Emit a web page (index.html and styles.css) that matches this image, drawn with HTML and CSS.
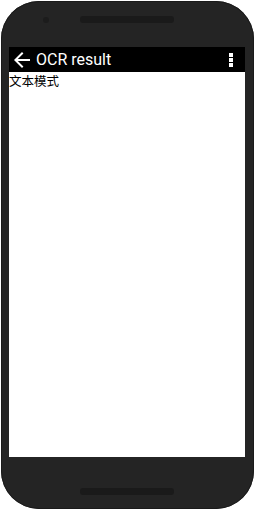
FILE: index.html
```html
<!DOCTYPE html>
<html lang="zh">
<head>
<meta charset="UTF-8">
<meta name="viewport" content="width=device-width, initial-scale=1.0">
<title>OCR result</title>
<link rel="stylesheet" href="styles.css">
</head>
<body>
<div class="phone">
    <!-- top bezel: camera + speaker -->
    <div class="camera"></div>
    <div class="speaker top"></div>
    <div class="screen">
        <div class="toolbar">
            <svg class="back-icon" viewBox="0 0 24 24" width="24" height="24">
                <path d="M20 11H7.83l5.59-5.59L12 4l-8 8 8 8 1.41-1.41L7.83 13H20v-2z" fill="#fff"/>
            </svg>
            <span class="title">OCR result</span>
            <div class="menu">
                <span></span><span></span><span></span>
            </div>
        </div>
        <div class="content">文本模式</div>
    </div>
    <div class="speaker bottom"></div>
</div>
</body>
</html>
```

FILE: styles.css
```css
body {
    margin: 0;
    background-color: #fff;
    font-family: Roboto, "Noto Sans", sans-serif;
}
.phone {
    position: relative;
    width: 253px;
    height: 508px;
    margin: 1px 0 0 1px;
    box-sizing: border-box;
    padding: 46px 9px 0 8px;
    background-color: #242424;
    border-radius: 38px;
    box-shadow: inset 0 0 0 1px #1a1a1a;
}
.camera {
    position: absolute;
    left: 42px;
    top: 16px;
    width: 6px;
    height: 6px;
    border-radius: 50%;
    background-color: #1c1c1c;
}
.speaker {
    position: absolute;
    left: 79px;
    width: 94px;
    height: 7px;
    border-radius: 3px;
    background-color: #1a1a1a;
}
.speaker.top {
    top: 15px;
}
.speaker.bottom {
    top: 487px;
}
.screen {
    width: 236px;
    height: 410px;
    background-color: #fff;
    display: flex;
    flex-direction: column;
}
.toolbar {
    height: 25px;
    background-color: #000;
    display: flex;
    align-items: center;
    padding: 0 12px 0 1px;
    color: #fff;
}
.back-icon {
    flex: none;
}
.title {
    margin-left: 2px;
    font-size: 16px;
    flex: 1;
}
.menu {
    display: flex;
    flex-direction: column;
    gap: 1px;
}
.menu span {
    width: 4px;
    height: 4px;
    background-color: #fff;
}
.content {
    font-family: "Noto Sans CJK SC", sans-serif;
    font-size: 12.5px;
    line-height: 17px;
    color: #000;
}
```
